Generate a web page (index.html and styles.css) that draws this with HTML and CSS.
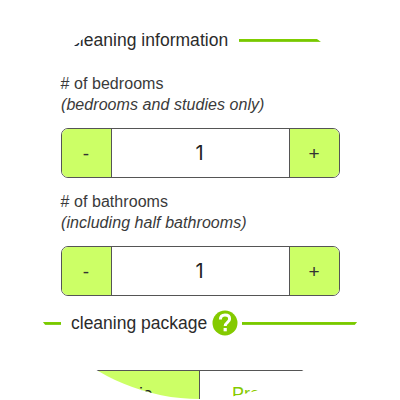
FILE: index.html
```
<!DOCTYPE html>
<html lang="en">
<head>
<meta charset="utf-8">
<title>Cleaning booking</title>
<link rel="stylesheet" href="styles.css">
</head>
<body>
<main class="lens">
  <h2 class="section first"><span class="rule lead"></span><span class="title">cleaning information</span><span class="rule tail"></span></h2>
  <section class="field">
    <div class="label"># of bedrooms</div>
    <div class="hint">(bedrooms and studies only)</div>
    <div class="stepper"><button class="step">-</button><output class="value">1</output><button class="step plus">+</button></div>
  </section>
  <section class="field second">
    <div class="label"># of bathrooms</div>
    <div class="hint">(including half bathrooms)</div>
    <div class="stepper"><button class="step">-</button><output class="value">1</output><button class="step plus">+</button></div>
  </section>
  <h2 class="section package"><span class="rule lead"></span><span class="title">cleaning package</span>
    <svg class="help" viewBox="0 0 26 26"><circle cx="13" cy="13" r="12.5" fill="#84ca00"/><path d="M8.4 9.6C8.4 6.500 10.300 5 13 5c2.900 0 4.600 1.600 4.600 3.900 0 3.400-4.400 3.500-4.400 7.200" fill="none" stroke="#fff" stroke-width="3"/><rect x="11.600" y="18" width="3.200" height="3.300" fill="#fff"/></svg>
    <span class="rule tail"></span></h2>
  <div class="tabs"><div class="tab active">Basic</div><div class="tab">Premium</div></div>
</main>
</body>
</html>
```
FILE: styles.css
```
* { box-sizing: border-box; }
body { margin: 0; background: #fff; color: #3a3a3a; font-family: "Liberation Sans", Arial, sans-serif; }
.lens { width: 400px; height: 400px; overflow: hidden; background: #fff; clip-path: circle(199px at 200px 200px); padding-top: 28px; }
.section { display: flex; align-items: center; height: 26px; margin: 0; font-size: 17.5px; font-weight: 400; color: #2b2b2b; }
.rule { height: 3px; background: linear-gradient(#84d000, #72c400 70%, #a5de4d); }
.tail { flex: 1; }
.first { height: 25px; }
.first .lead { width: 61px; }
.first .title { width: 158px; margin: 0 10px; white-space: nowrap; letter-spacing: 0.03px; }
.field { width: 279px; margin: 20px 0 0 61px; }
.label, .hint { height: 21px; line-height: 21px; font-size: 16px; white-space: nowrap; letter-spacing: 0.06px; margin-left: -0.5px; }
.hint { font-style: italic; margin-left: 0; }
.stepper { display: flex; width: 279px; height: 50px; margin-top: 13px; border: 1px solid #555; border-radius: 7px; overflow: hidden; }
.step { width: 50px; border: 0; border-right: 1px solid #555; padding: 1px 1px 0 0; background: #cf6; color: #333; font: 19px "Liberation Sans", Arial, sans-serif; }
.plus { border-right: 0; border-left: 1px solid #555; }
.value { flex: 1; padding-right: 2px; font: 20px/49px Inter, sans-serif; color: #222; text-align: center; }
.second { margin-top: 13px; }
.package { margin-top: 14px; }
.package .lead { width: 61px; }
.package .title { width: 137px; margin: 0 4px 0 10px; white-space: nowrap; }
.help { width: 26px; height: 26px; margin-right: 4px; }
.tabs { display: flex; width: 279px; height: 50px; margin: 34px 0 0 61px; border: 1px solid #555; border-radius: 7px; overflow: hidden; }
.tab { flex: 1; text-align: center; font-size: 18px; line-height: 46px; color: #84ca00; }
.tab:last-child { padding-right: 3px; }
.active { background: #cf6; color: #222; border-right: 1px solid #555; padding-right: 1px; }
```
